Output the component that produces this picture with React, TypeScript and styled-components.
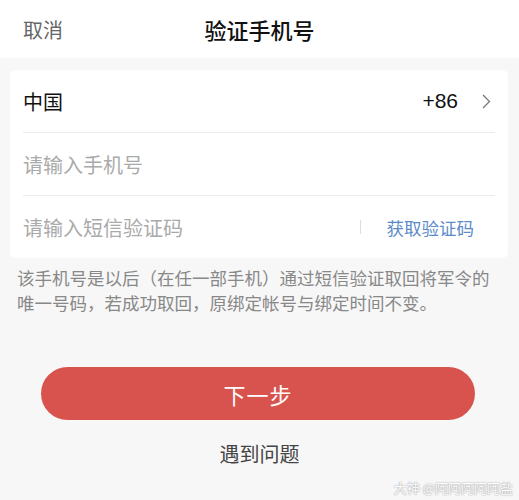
import styled, { createGlobalStyle } from "styled-components";

const GlobalStyle = createGlobalStyle`
  html, body {
    margin: 0;
    padding: 0;
    background: #f7f7f7;
    font-family: "Noto Sans CJK SC", "Noto Sans", sans-serif;
  }
`;

const Page = styled.div`
  position: relative;
  width: 519px;
  height: 500px;
  overflow: hidden;
  background: #f7f7f7;
`;

const Header = styled.header`
  height: 58px;
  background: #fff;
  display: grid;
  grid-template-columns: 1fr auto 1fr;
  align-items: center;
  padding: 0 23px;
`;

const Cancel = styled.span`
  font-size: 20px;
  color: #666;
`;

const Title = styled.h1`
  margin: 0;
  font-size: 22px;
  font-weight: 500;
  color: #111;
`;

const Card = styled.div`
  margin: 12px 11px 0 10px;
  background: #fff;
  border-radius: 6px;
  padding: 0 13px 0 13px;
`;

const Row = styled.div<{ $last?: boolean }>`
  height: 62px;
  display: flex;
  align-items: center;
  border-bottom: ${(p) => (p.$last ? "none" : "1px solid #ececec")};
`;

const Label = styled.span<{ $muted?: boolean }>`
  flex: 1;
  font-size: 20px;
  color: ${(p) => (p.$muted ? "#aaa" : "#111")};
`;

const Code = styled.span`
  font-family: "Liberation Sans", Arial, sans-serif;
  font-size: 21px;
  color: #111;
  margin-right: 24px;
`;

const Chevron = styled.svg`
  width: 9px;
  height: 15px;
  margin-right: 4px;
`;

const Divider = styled.span`
  width: 1px;
  height: 14px;
  background: #ddd;
  margin-right: 26px;
`;

const GetCode = styled.span`
  font-size: 17.5px;
  color: #5b8bc9;
  margin-right: 21px;
`;

const Note = styled.p`
  margin: 7px 20px 0 17px;
  font-size: 17.5px;
  line-height: 25px;
  color: #888;
`;

const NextButton = styled.button`
  display: block;
  margin: 52px auto 0 41px;
  width: 434px;
  height: 53px;
  border: none;
  border-radius: 27px;
  background: #d9534e;
  color: #fff;
  font-family: inherit;
  font-size: 22px;
  letter-spacing: 1px;
`;

const Help = styled.div`
  margin-top: 19px;
  text-align: center;
  font-size: 20px;
  color: #444;
`;

const Watermark = styled.div`
  position: absolute;
  right: 6px;
  bottom: 3px;
  font-size: 13px;
  color: #fff;
  text-shadow: 0 0 2px #aaa, 0 0 1px #999;
`;

export default function App() {
  return (
    <Page>
      <GlobalStyle />
      <Header>
        <Cancel>取消</Cancel>
        <Title>验证手机号</Title>
        <span />
      </Header>
      <Card>
        <Row>
          <Label>中国</Label>
          <Code>+86</Code>
          <Chevron viewBox="0 0 9 15">
            <path d="M1 1l6.5 6.5L1 14" fill="none" stroke="#777" strokeWidth="1.3" />
          </Chevron>
        </Row>
        <Row>
          <Label $muted>请输入手机号</Label>
        </Row>
        <Row $last>
          <Label $muted>请输入短信验证码</Label>
          <Divider />
          <GetCode>获取验证码</GetCode>
        </Row>
      </Card>
      <Note>
        该手机号是以后（在任一部手机）通过短信验证取回将军令的唯一号码，若成功取回，原绑定帐号与绑定时间不变。
      </Note>
      <NextButton>下一步</NextButton>
      <Help>遇到问题</Help>
      <Watermark>大神 @阿阿阿阿阿盐</Watermark>
    </Page>
  );
}
